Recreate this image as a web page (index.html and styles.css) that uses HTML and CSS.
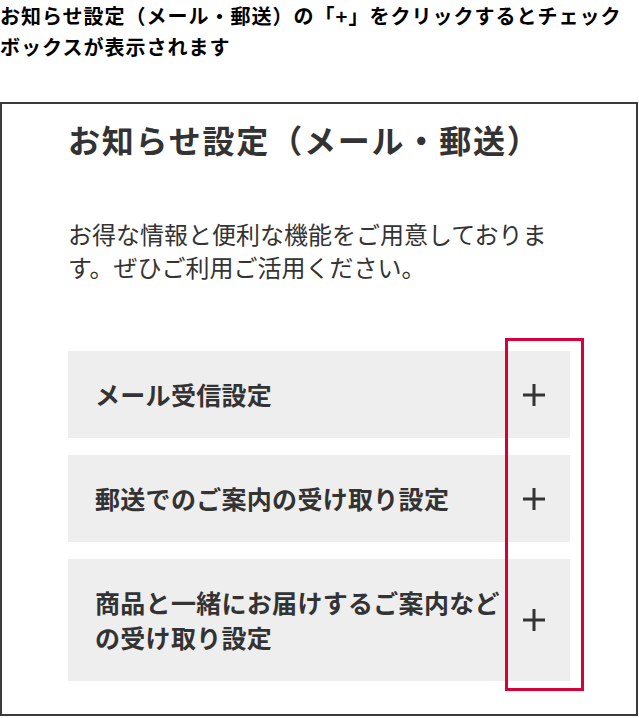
FILE: index.html
```html
<!DOCTYPE html>
<html lang="ja">

<head>
  <meta charset="UTF-8">
  <meta name="viewport" content="width=device-width, initial-scale=1.0">
  <title>お知らせ設定</title>
  <link rel="stylesheet" href="styles.css">
</head>

<body>
  <p class="caption">お知らせ設定（メール・郵送）の「+」をクリックするとチェックボックスが表示されます</p>

  <div class="screen">
    <h1 class="screen-title">お知らせ設定（メール・郵送）</h1>
    <p class="screen-lead">お得な情報と便利な機能をご用意しております。ぜひご利用ご活用ください。</p>

    <div class="setting-list">
      <div class="setting-item">
        <span class="setting-label">メール受信設定</span>
        <svg class="setting-plus" viewBox="0 0 22 22"><path d="M11 0V22M0 11H22" /></svg>
      </div>
      <div class="setting-item">
        <span class="setting-label">郵送でのご案内の受け取り設定</span>
        <svg class="setting-plus" viewBox="0 0 22 22"><path d="M11 0V22M0 11H22" /></svg>
      </div>
      <div class="setting-item">
        <span class="setting-label">商品と一緒にお届けするご案内などの受け取り設定</span>
        <svg class="setting-plus" viewBox="0 0 22 22"><path d="M11 0V22M0 11H22" /></svg>
      </div>

      <!-- 「+」ボタンの位置を示す枠 -->
      <div class="highlight"></div>
    </div>
  </div>
</body>

</html>
```

FILE: styles.css
```css
body {
  margin: 0;
  background-color: #fff;
  font-family: "Noto Sans CJK JP", "Noto Sans", sans-serif;
}

.caption {
  margin: 0 0 40px;
  font-size: 20px;
  font-weight: bold;
  line-height: 31px;
  letter-spacing: 1px;
  color: #000;
}

.screen {
  width: 638px;
  box-sizing: border-box;
  border: 2px solid #3a3a3a;
  padding: 13px 66px 33px;
  color: #333;
}

.screen-title {
  margin: 0;
  font-size: 32px;
  font-weight: bold;
  line-height: 45px;
  letter-spacing: 1.8px;
}

.screen-lead {
  margin: 55px 0 0;
  font-size: 24px;
  line-height: 33px;
}

.setting-list {
  position: relative;
  margin-top: 68px;
  display: flex;
  flex-direction: column;
  gap: 17px;
}

.setting-item {
  display: flex;
  align-items: center;
  gap: 14px;
  padding: 26px 25px 26px 27px;
  background-color: #eee;
}

.setting-label {
  flex: 1;
  font-size: 25px;
  font-weight: bold;
  line-height: 35px;
  letter-spacing: 0.3px;
}

.setting-plus {
  flex: none;
  width: 22px;
  height: 22px;
  stroke: #333;
  stroke-width: 3;
  fill: none;
}

.highlight {
  position: absolute;
  top: -13px;
  bottom: -10px;
  right: -14px;
  width: 79px;
  box-sizing: border-box;
  border: 3px solid #d7003a;
}
```
